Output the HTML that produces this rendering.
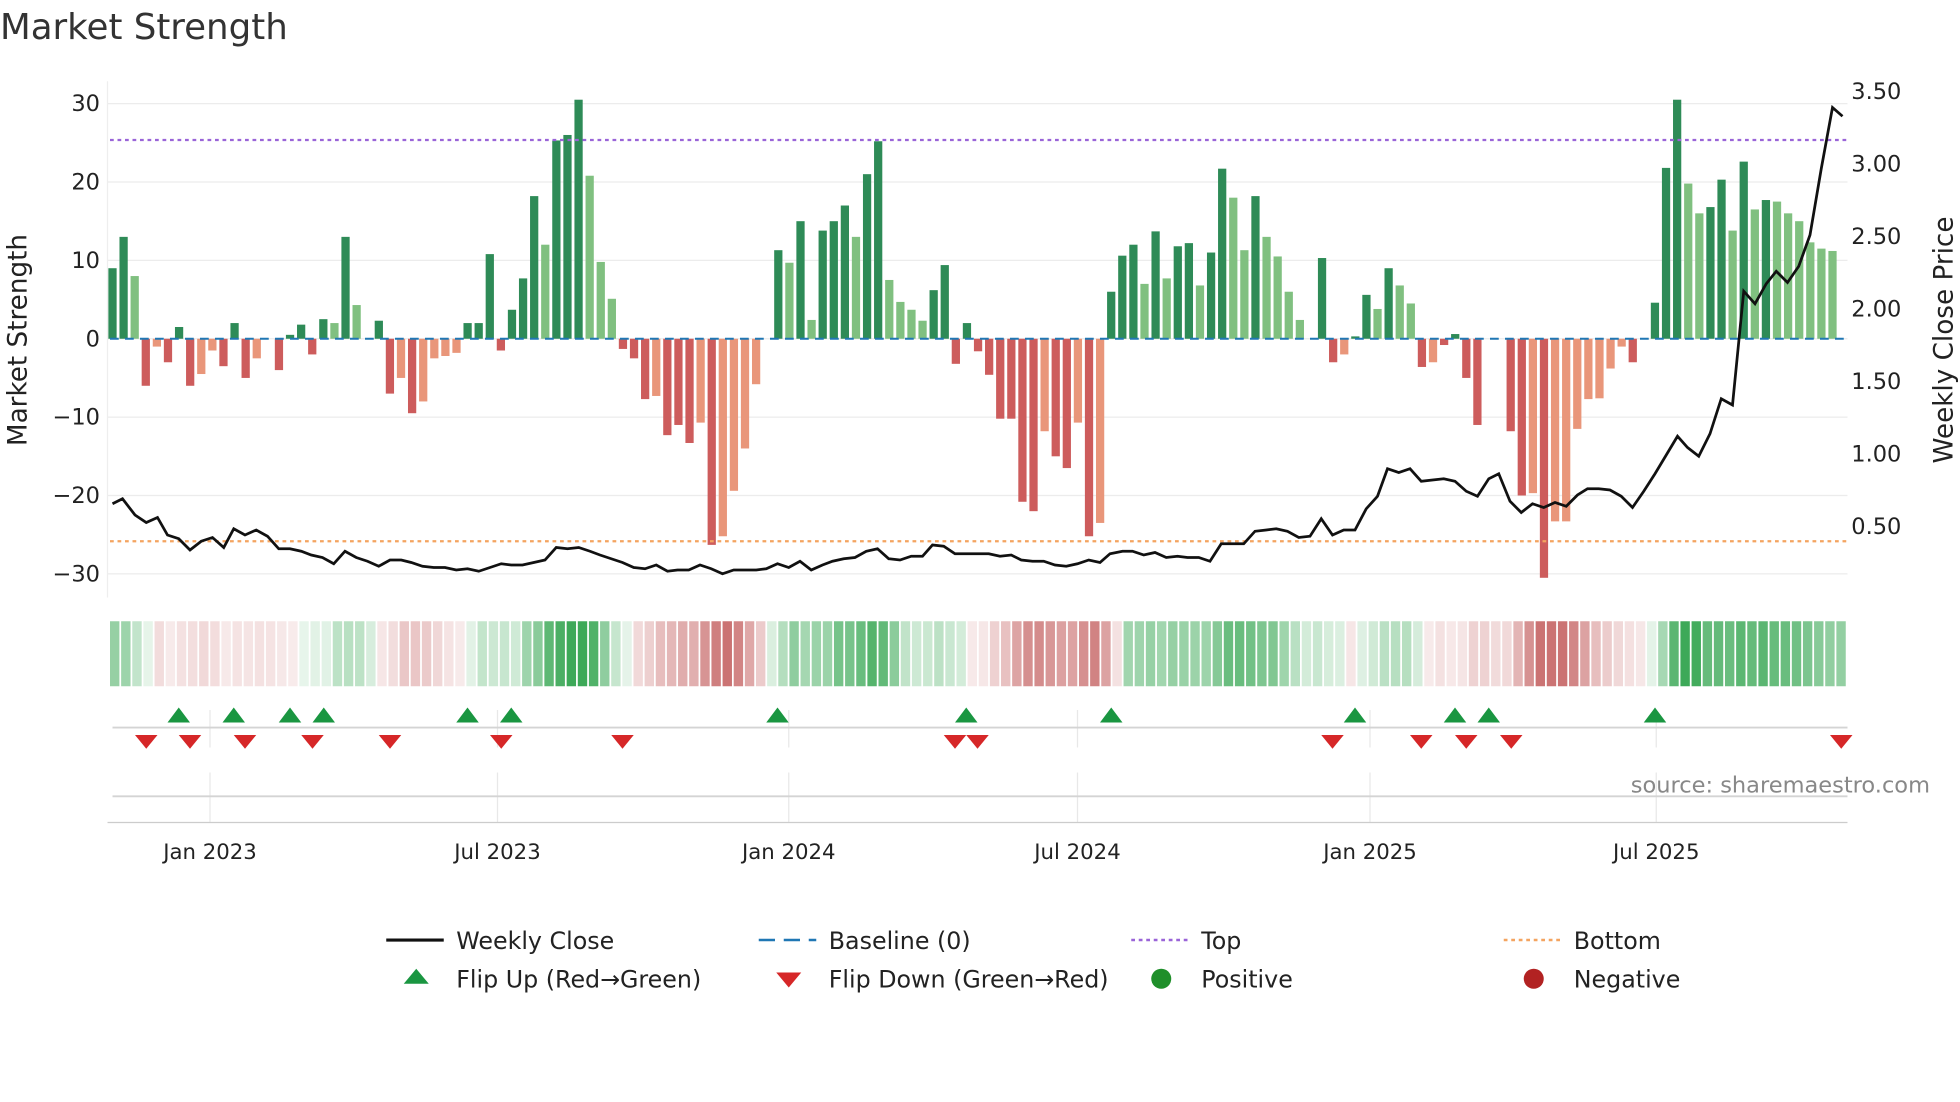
<!DOCTYPE html>
<html><head><meta charset="utf-8"><style>
html,body{margin:0;padding:0;background:#fff;width:1960px;height:1102px;overflow:hidden}
svg{display:block}
text{font-family:"DejaVu Sans","Liberation Sans",sans-serif}
</style></head><body>
<svg id="s" width="1960" height="1102" viewBox="0 0 1568 881.6" xmlns="http://www.w3.org/2000/svg">
<rect width="1568" height="882" fill="#fff"/>
<text x="0" y="31" font-size="28.5" fill="#333">Market Strength</text>
<g id="grid" stroke="#ececec" stroke-width="1"></g>
<line x1="86" y1="65" x2="86" y2="478" stroke="#eee"/>
<g id="bars"></g>
<line x1="88" y1="271" x2="1478" y2="271" stroke="#1f77b4" stroke-width="1.6" stroke-dasharray="7,5"/>
<line x1="88" y1="112" x2="1478" y2="112" stroke="#9a64d8" stroke-width="1.8" stroke-dasharray="3,3"/>
<line x1="88" y1="433" x2="1478" y2="433" stroke="#f4a460" stroke-width="1.8" stroke-dasharray="3,3"/>
<polyline id="close" fill="none" stroke="#111" stroke-width="2.2"/>
<g id="lt" font-size="18" fill="#222" text-anchor="end"></g>
<g id="rt" font-size="18" fill="#222"></g>
<text transform="translate(21,272) rotate(-90)" font-size="21" fill="#222" text-anchor="middle">Market Strength</text>
<text transform="translate(1562,272) rotate(-90)" font-size="21" fill="#222" text-anchor="middle">Weekly Close Price</text>
<g id="heat"></g>
<g id="vg" stroke="#e8e8e8"></g>
<line x1="90" y1="582" x2="1478" y2="582" stroke="#d4d4d4" stroke-width="1.5"/>
<line x1="90" y1="637" x2="1478" y2="637" stroke="#d4d4d4" stroke-width="1.5"/>
<line x1="86" y1="658" x2="1478" y2="658" stroke="#ccc" stroke-width="1"/>
<g id="tri"></g>
<text x="1544" y="634" font-size="18" fill="#888" text-anchor="end">source: sharemaestro.com</text>
<g id="xl" font-size="17" fill="#222" text-anchor="middle"></g>
<g font-size="19" fill="#222">
<line x1="309" y1="752" x2="355" y2="752" stroke="#111" stroke-width="2.5"/>
<text x="365" y="759">Weekly Close</text>
<line x1="607" y1="752" x2="653" y2="752" stroke="#1f77b4" stroke-width="2" stroke-dasharray="13,7"/>
<text x="663" y="759">Baseline (0)</text>
<line x1="905" y1="752" x2="951" y2="752" stroke="#9a64d8" stroke-width="2" stroke-dasharray="3,3"/>
<text x="961" y="759">Top</text>
<line x1="1203" y1="752" x2="1249" y2="752" stroke="#f4a460" stroke-width="2" stroke-dasharray="3,3"/>
<text x="1259" y="759">Bottom</text>
<polygon points="323,787 333,775 343,787" fill="#1a9641"/>
<text x="365" y="790">Flip Up (Red→Green)</text>
<polygon points="621,778 641,778 631,790" fill="#d62728"/>
<text x="663" y="790">Flip Down (Green→Red)</text>
<circle cx="929" cy="783" r="8" fill="#1f8f2a"/>
<text x="961" y="790">Positive</text>
<circle cx="1227" cy="783" r="8" fill="#b22222"/>
<text x="1259" y="790">Negative</text>
</g>
</svg>
<script>
var NS="http://www.w3.org/2000/svg";
function el(p,t,a,txt){var e=document.createElementNS(NS,t);for(var k in a)e.setAttribute(k,a[k]);if(txt!=null)e.textContent=txt;document.getElementById(p).appendChild(e);return e;}
var V=[[9],[13],[8,1],[-6],[-1,1],[-3],[1.5],[-6],[-4.5,1],[-1.5,1],[-3.5],[2],[-5],[-2.5,1],[0],[-4],[0.5],[1.8],[-2],[2.5],[2,1],[13],[4.3,1],[0],[2.3],[-7],[-5,1],[-9.5],[-8,1],[-2.5,1],[-2.2,1],[-1.8,1],[2],[2],[10.8],[-1.5],[3.7],[7.7],[18.2],[12,1],[25.3],[26],[30.5],[20.8,1],[9.8,1],[5.1,1],[-1.3],[-2.5],[-7.7],[-7.3,1],[-12.3],[-11],[-13.3],[-10.7,1],[-26.3],[-25.2,1],[-19.4,1],[-14,1],[-5.8,1],[0],[11.3],[9.7,1],[15],[2.4,1],[13.8],[15],[17],[13,1],[21],[25.2],[7.5,1],[4.7,1],[3.7,1],[2.3,1],[6.2],[9.4],[-3.2],[2],[-1.6],[-4.6],[-10.2],[-10.2],[-20.8],[-22],[-11.8,1],[-15],[-16.5],[-10.7,1],[-25.2],[-23.5,1],[6],[10.6],[12],[7,1],[13.7],[7.7,1],[11.8],[12.2],[6.8,1],[11],[21.7],[18,1],[11.3,1],[18.2],[13,1],[10.5,1],[6,1],[2.4,1],[0],[10.3],[-3],[-2,1],[0.3],[5.6],[3.8,1],[9],[6.8,1],[4.5,1],[-3.6],[-3,1],[-0.8],[0.6],[-5],[-11],[0],[0],[-11.8],[-20],[-19.7,1],[-30.5],[-23.3,1],[-23.3,1],[-11.5,1],[-7.7,1],[-7.6,1],[-3.8,1],[-1,1],[-3],[0],[4.6],[21.8],[30.5],[19.8,1],[16,1],[16.8],[20.3],[13.8,1],[22.6],[16.5,1],[17.7],[17.5,1],[16,1],[15,1],[12.3,1],[11.5,1],[11.2,1]];
var n=V.length, x0=90, dx=(1466-90)/(n-1);
[30,20,10,0,-10,-20,-30].forEach(function(v){var y=271-v*6.27;el("grid","line",{x1:86,y1:y,x2:1478,y2:y});el("lt","text",{x:80,y:y+6},(v<0?"−":"")+Math.abs(v));});
["3.50","3.00","2.50","2.00","1.50","1.00","0.50"].forEach(function(s,i){el("rt","text",{x:1481,y:73+i*58+6},s);});
V.forEach(function(d,i){var v=d[0],x=x0+i*dx,h=Math.abs(v)*6.27,y=v>=0?271-h:271;
 if(Math.abs(v)<0.2){return;}
 var c=v>0?(d[1]?"#80c080":"#2e8b57"):(d[1]?"#e9967a":"#cd5c5c");
 el("bars","rect",{x:x-3.3,y:y,width:6.6,height:Math.max(h,1),fill:c});
});
var hx=1390/n;
for(var i=0;i<n;i++){var s=0,c=0;for(var j=Math.max(0,i-1);j<=Math.min(n-1,i+1);j++){s+=V[j][0];c++;}s/=c;
 var a=Math.min(1,0.12+Math.abs(s)/26);var col=s>=0?"rgba(40,160,70,"+(a*0.9)+")":"rgba(190,80,80,"+(a*0.8)+")";
 el("heat","rect",{x:88+i*hx,y:497,width:hx-1.4,height:52,fill:col});}
var P=[[90,403],[98,399],[108,412],[117,418],[126,414],[134,428],[143,431],[152,440],[161,433],[170,430],[179,438],[187,423],[196,428],[205,424],[214,429],[223,439],[232,439],[241,441],[249,444],[258,446],[267,451],[276,441],[285,446],[294,449],[303,453],[312,448],[321,448],[329,450],[338,453],[347,454],[356,454],[365,456],[374,455],[383,457],[392,454],[401,451],[409,452],[418,452],[427,450],[436,448],[445,438],[454,439],[463,438],[472,441],[480,444],[489,447],[498,450],[507,454],[516,455],[525,452],[534,457],[542,456],[551,456],[560,452],[569,455],[578,459],[587,456],[596,456],[605,456],[613,455],[622,451],[631,454],[640,449],[649,456],[658,452],[666,449],[675,447],[684,446],[693,441],[702,439],[711,447],[720,448],[729,445],[738,445],[746,436],[755,437],[764,443],[773,443],[782,443],[791,443],[800,445],[809,444],[817,448],[826,449],[835,449],[844,452],[853,453],[862,451],[871,448],[880,450],[888,443],[898,441],[906,441],[915,444],[924,442],[933,446],[942,445],[950,446],[959,446],[968,449],[977,435],[986,435],[995,435],[1004,425],[1013,424],[1021,423],[1030,425],[1039,430],[1048,429],[1057,415],[1066,428],[1075,424],[1084,424],[1093,407],[1102,397],[1110,375],[1119,378],[1128,375],[1137,385],[1146,384],[1155,383],[1164,385],[1173,393],[1182,397],[1191,383],[1199,379],[1208,401],[1217,410],[1226,403],[1235,406],[1244,402],[1253,405],[1262,396],[1270,391],[1279,391],[1288,392],[1297,397],[1306,406],[1315,393],[1324,379],[1333,364],[1342,349],[1350,358],[1359,365],[1368,347],[1377,319],[1386,324],[1395,233],[1404,243],[1413,227],[1421,217],[1430,226],[1439,213],[1448,188],[1457,135],[1466,86],[1474,93]];
document.getElementById("close").setAttribute("points",P.map(function(p){return p.join(",")}).join(" "));
[[168,"Jan 2023"],[398,"Jul 2023"],[631,"Jan 2024"],[862,"Jul 2024"],[1096,"Jan 2025"],[1325,"Jul 2025"]].forEach(function(t){el("vg","line",{x1:t[0],y1:568,x2:t[0],y2:598});el("vg","line",{x1:t[0],y1:618,x2:t[0],y2:658});el("xl","text",{x:t[0],y:687},t[1]);});
[143,187,232,259,374,409,622,773,889,1084,1164,1191,1324].forEach(function(x){el("tri","polygon",{points:(x-9)+",578 "+x+",566 "+(x+9)+",578",fill:"#1a9641"});});
[117,152,196,250,312,401,498,764,782,1066,1137,1173,1209,1473].forEach(function(x){el("tri","polygon",{points:(x-9)+",588 "+(x+9)+",588 "+x+",599",fill:"#d62728"});});
</script>
</body></html>
